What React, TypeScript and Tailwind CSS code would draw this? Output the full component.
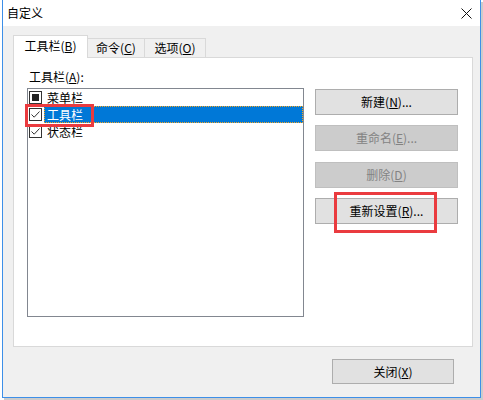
import React from 'react';

const FONT = "font-['Noto_Sans_CJK_SC','Noto_Sans',sans-serif]";

function CheckBox({ state }: { state: 'checked' | 'mixed' }) {
  return (
    <div className="w-[13px] h-[13px] border border-[#333] bg-white flex items-center justify-center shrink-0">
      {state === 'mixed' ? (
        <div className="w-[7px] h-[7px] bg-[#222]" />
      ) : (
        <svg width="11" height="11" viewBox="0 0 11 11">
          <path d="M1.5 5.5 L4.2 8.2 L9.5 2.5" fill="none" stroke="#333" strokeWidth="1" />
        </svg>
      )}
    </div>
  );
}

function ListRow({ label, state, selected }: { label: string; state: 'checked' | 'mixed'; selected?: boolean }) {
  return (
    <div className="h-[17px] flex items-center pl-[1px]">
      <CheckBox state={state} />
      <div
        className={
          selected
            ? 'ml-[2px] flex-1 h-[17px] flex items-center pl-[2px] bg-[#0078d7] text-white border border-dotted border-[#f5a623]'
            : 'ml-[2px] flex-1 h-[17px] flex items-center pl-[3px] text-black'
        }
      >
        {label}
      </div>
    </div>
  );
}

function Btn({ children, disabled, w = 'w-[143px]' }: { children: React.ReactNode; disabled?: boolean; w?: string }) {
  return (
    <div
      className={
        `${w} h-[26px] flex items-center justify-center border ` +
        (disabled ? 'bg-[#cccccc] border-[#bfbfbf] text-[#838383]' : 'bg-[#e1e1e1] border-[#adadad] text-black')
      }
    >
      {children}
    </div>
  );
}

export default function App() {
  return (
    <div className={`${FONT} relative w-[483px] h-[400px] bg-white overflow-hidden text-[12px] leading-none text-black`}>
      <div className="ml-[2px] w-[479px] h-[398px] border-x border-b border-[#3d8fe8] shadow-[2px_2px_0_#cccccc] bg-[#f0f0f0] flex flex-col">
        {/* title bar */}
        <div className="h-[26px] bg-white flex items-center justify-between pl-[4px] pr-[8px]">
          <span>自定义</span>
          <svg width="11" height="11" viewBox="0 0 11 11">
            <path d="M0.5 0.5 L10.5 10.5 M10.5 0.5 L0.5 10.5" stroke="#111" strokeWidth="1" />
          </svg>
        </div>

        {/* tabs */}
        <div className="mt-[9px] ml-[10px] flex items-end h-[22px]">
          <div className="relative z-10 w-[75px] h-[23px] -mb-[1px] bg-white border-x border-t border-[#d9d9d9] flex items-center justify-center pb-[2px]">
            工具栏(<u>B</u>)
          </div>
          <div className="w-[57px] h-[19px] bg-[#f0f0f0] border-r border-t border-[#d9d9d9] flex items-center justify-center">
            命令(<u>C</u>)
          </div>
          <div className="w-[61px] h-[19px] bg-[#f0f0f0] border-r border-t border-[#d9d9d9] flex items-center justify-center">
            选项(<u>O</u>)
          </div>
        </div>

        {/* tab panel */}
        <div className="ml-[10px] w-[460px] h-[290px] bg-white border border-[#d9d9d9] flex">
          <div className="ml-[13px] flex flex-col">
            <div className="mt-[11px] ml-[2px] h-[16px] flex items-center">
              工具栏(<u>A</u>):
            </div>
            <div className="mt-[3px] w-[277px] h-[229px] border border-[#828790] flex flex-col">
              <ListRow label="菜单栏" state="mixed" />
              <ListRow label="工具栏" state="checked" selected />
              <ListRow label="状态栏" state="checked" />
            </div>
          </div>
          <div className="ml-[11px] mt-[31px] flex flex-col">
            <Btn>
              新建(<u>N</u>)...
            </Btn>
            <div className="mt-[10px]">
              <Btn disabled>
                重命名(<u>E</u>)...
              </Btn>
            </div>
            <div className="mt-[11px]">
              <Btn disabled>
                删除(<u>D</u>)
              </Btn>
            </div>
            <div className="mt-[10px]">
              <Btn>
                重新设置(<u>R</u>)...
              </Btn>
            </div>
          </div>
        </div>

        {/* footer */}
        <div className="mt-[12px] flex justify-end pr-[26px]">
          <div className="w-[122px] h-[25px] bg-[#e1e1e1] border border-[#adadad] flex items-center justify-center">
            关闭(<u>X</u>)
          </div>
        </div>
      </div>

      {/* red annotation boxes */}
      <div className="absolute left-[25px] top-[104px] w-[69px] h-[23px] border-[3px] border-[#ea3b3f]" />
      <div className="absolute left-[334px] top-[192px] w-[103px] h-[41px] border-[3px] border-[#ea3b3f]" />
    </div>
  );
}
